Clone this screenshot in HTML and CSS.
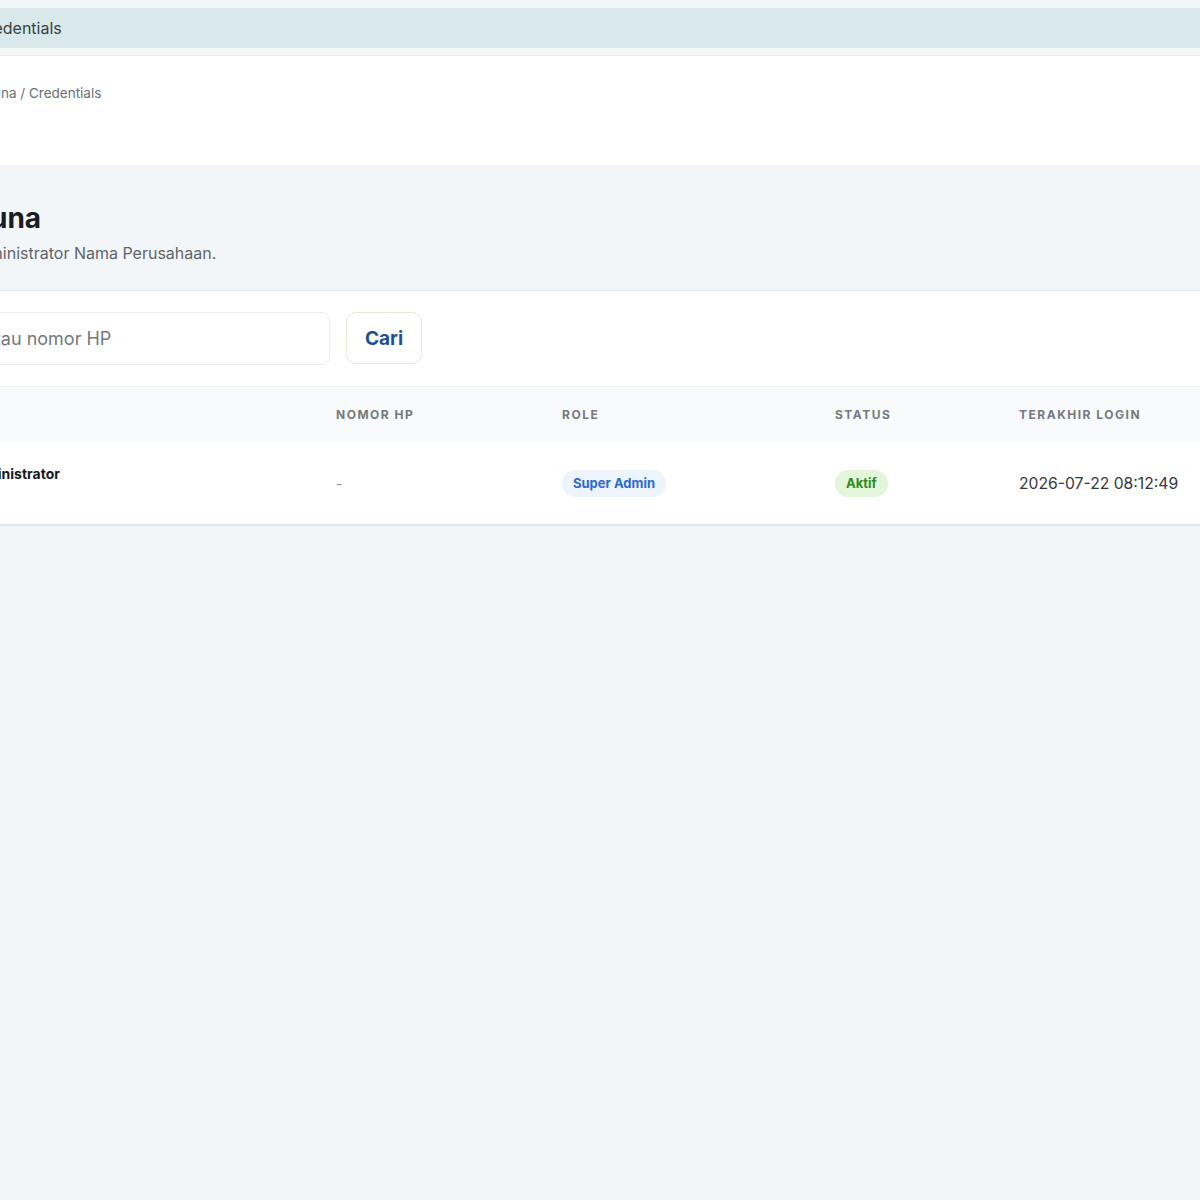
FILE: index.html
```html
<!DOCTYPE html>
<html lang="id">
<head>
    <meta charset="UTF-8">
    <meta name="viewport" content="width=device-width, initial-scale=1.0">
    <title>Manajemen Pengguna - Credentials</title>
    <link rel="stylesheet" href="styles.css">
</head>
<body>

    <div class="halaman">
        <div class="barAtas">
            <span class="judulTab">Credentials</span>
        </div>

        <div class="remahRoti">Dashboard / Manajemen Pengguna / Credentials</div>

        <main class="konten">
            <h1>Manajemen Pengguna</h1>
            <p class="keterangan">Kelola akun pengguna administrator Nama Perusahaan.</p>

            <section class="kartu">
                <form class="pencarian" onsubmit="return false">
                    <input type="text" placeholder="Cari nama, email atau nomor HP">
                    <button type="submit">Cari</button>
                </form>

                <div class="tabel">
                    <div class="baris kepala">
                        <div>NAMA</div>
                        <div>NOMOR HP</div>
                        <div>ROLE</div>
                        <div>STATUS</div>
                        <div>TERAKHIR LOGIN</div>
                    </div>
                    <div class="baris isi">
                        <div class="pengguna">
                            <span class="avatar">SA</span>
                            <span class="nama">Super Administrator</span>
                        </div>
                        <div class="kosong">-</div>
                        <div><span class="lencana peran">Super Admin</span></div>
                        <div><span class="lencana aktif">Aktif</span></div>
                        <div class="waktu">2026-07-22 08:12:49</div>
                    </div>
                </div>
            </section>
        </main>
    </div>

</body>
</html>
```

FILE: styles.css
```css
body {
    margin: 0;
    background-color: #f3f6f9;
    font-family: Inter, "Noto Sans", sans-serif;
    color: #1f2328;
    overflow: hidden;
}

.halaman {
    width: 1500px;
    margin-left: -190px;
}

.barAtas {
    margin-top: 8px;
    height: 40px;
    background-color: #d9e9eb;
    display: flex;
    align-items: center;
    padding-left: 166px;
    border-bottom: 7px solid #f4f8f9;
}

.judulTab {
    font-size: 16px;
    color: #3a3f44;
}

.remahRoti {
    background-color: #ffffff;
    border-top: 1px solid #e4eaed;
    height: 110px;
    box-sizing: border-box;
    padding-top: 28px;
    text-indent: -18px;
    font-size: 13.5px;
    line-height: 18px;
    color: #6b6f74;
}

.konten {
    padding-top: 36px;
}

h1 {
    margin: 0;
    text-indent: -74px;
    font-size: 28px;
    line-height: 34px;
    font-weight: 700;
    color: #1a1d21;
}

.keterangan {
    margin: 7px 0 26px;
    text-indent: -12px;
    font-size: 16px;
    line-height: 22px;
    color: #5f6469;
}

.kartu {
    background-color: #ffffff;
    border-top: 1px solid #e3e8ec;
    border-bottom: 2px solid #e2e6ea;
    box-shadow: 0 6px 14px rgba(30, 50, 70, 0.05);
}

.pencarian {
    display: flex;
    gap: 16px;
    padding: 21px 24px;
    margin: 0;
}

.pencarian input {
    width: 496px;
    height: 53px;
    box-sizing: border-box;
    padding: 0 16px 0 3px;
    border: 1px solid #eceef0;
    border-radius: 8px;
    font-family: inherit;
    font-size: 18px;
    color: #333;
}

.pencarian input::placeholder {
    color: #74787c;
}

.pencarian button {
    width: 76px;
    height: 52px;
    background-color: #ffffff;
    border: 1px solid #e6ead6;
    border-radius: 10px;
    font-family: inherit;
    font-size: 19px;
    font-weight: 700;
    color: #1e4f94;
    cursor: pointer;
}

.baris {
    display: grid;
    grid-template-columns: 502px 226px 273px 184px 1fr;
    padding-left: 24px;
    align-items: center;
}

.kepala {
    height: 55px;
    background-color: #f8fafb;
    border-top: 1px solid #edf0f2;
    font-size: 12px;
    font-weight: 700;
    letter-spacing: 1.5px;
    color: #76797d;
}

.isi {
    height: 82px;
    font-size: 16px;
}

.pengguna {
    display: flex;
    align-items: flex-start;
    gap: 12px;
    align-self: start;
    padding: 13px 0 0 36px;
}

.avatar {
    width: 40px;
    height: 40px;
    border-radius: 50%;
    background-color: #e8eef6;
    color: #2a6bd1;
    font-size: 14px;
    font-weight: 700;
    display: flex;
    align-items: center;
    justify-content: center;
}

.nama {
    font-size: 14px;
    font-weight: 700;
    color: #16191c;
    padding-top: 10px;
}

.kosong {
    color: #8a8d91;
    font-size: 14px;
}

.lencana {
    display: inline-block;
    height: 27px;
    line-height: 27px;
    padding: 0 11px;
    border-radius: 14px;
    font-size: 13px;
    font-weight: 700;
}

.peran {
    background-color: #eef4fc;
    color: #2a6bd1;
}

.aktif {
    background-color: #e3f6da;
    color: #2e8a20;
}

.waktu {
    font-size: 15.7px;
    color: #34383c;
}
```
